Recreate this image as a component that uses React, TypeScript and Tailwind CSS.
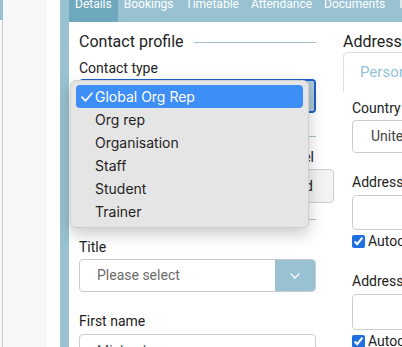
import React from "react";

const tabs = ["Details", "Bookings", "Timetable", "Attendance", "Documents", "Tasks"];
const contactTypes = ["Global Org Rep", "Org rep", "Organisation", "Staff", "Student", "Trainer"];

function Heading({ title }: { title: string }) {
  return (
    <div className="flex h-5 items-center gap-[10px]">
      <span className="whitespace-nowrap text-[16px] leading-5 text-[#222]">{title}</span>
      <div className="h-px flex-1 bg-[#a3c2ce]" />
    </div>
  );
}

function Label({ children }: { children: React.ReactNode }) {
  return <div className="text-[14px] leading-5 text-[#222]">{children}</div>;
}

function Chevron() {
  return (
    <svg width="10" height="6" viewBox="0 0 10 6" fill="none">
      <path d="M1 1l4 4 4-4" stroke="white" strokeWidth="1.2" strokeLinecap="round" strokeLinejoin="round" />
    </svg>
  );
}

function ContactTypeMenu() {
  return (
    <div className="absolute left-[-9px] top-px z-10 h-[148px] w-[239px] rounded-[6px] border border-[#cfcfcf] bg-[#e5e5e5] px-[5px] pt-[4px] font-['Inter',sans-serif] shadow-[0_6px_16px_rgba(0,0,0,0.22)]">
      {contactTypes.map((t, i) => (
        <div
          key={t}
          className={
            i === 0
              ? "flex h-[23px] items-center rounded-[4px] bg-[#3d8ef6] pl-[5px] text-[14px] text-white"
              : "flex h-[23px] items-center pl-[5px] text-[14px] text-[#1f1f1f]"
          }
        >
          <span className="flex w-[14px] items-center">
            {i === 0 && (
              <svg width="12" height="10" viewBox="0 0 12 10" fill="none">
                <path d="M1 5.2l3.6 3.6L11 1.2" stroke="white" strokeWidth="1.7" strokeLinecap="round" strokeLinejoin="round" />
              </svg>
            )}
          </span>
          {t}
        </div>
      ))}
    </div>
  );
}

export default function App() {
  return (
    <div className="flex h-[347px] w-[402px] overflow-hidden bg-white font-['Roboto',sans-serif]">
      {/* Side panel */}
      <div className="flex w-[3px] flex-col">
        <div className="h-[20px] bg-[#98c2d2]" />
        <div className="flex-1 border-r border-[#cbcbcb] bg-[#f7f7f7]" />
      </div>
      <div className="w-[44px] bg-[#f7f7f7]" />
      <div className="w-[13px] bg-white" />
      <div className="w-[9px] bg-[#98c2d2]" />

      {/* Main */}
      <div className="flex min-w-0 flex-1 flex-col">
        <div className="flex h-[22px] shrink-0 overflow-hidden bg-[#98c2d2]">
          {tabs.map((t, i) => (
            <div
              key={t}
              className={
                i === 0
                  ? "h-full whitespace-nowrap bg-[#6ea8bc] pl-[6px] pr-[6px] text-[12px] leading-[12px] text-white"
                  : "h-full whitespace-nowrap pl-[6px] pr-[6px] text-[12px] leading-[12px] text-white"
              }
            >
              <span className="-mt-[2px] block">{t}</span>
            </div>
          ))}
        </div>

        <div className="flex gap-[27px] pl-[10px] pt-[10px]">
          {/* Contact profile column */}
          <div className="w-[237px] shrink-0">
            <Heading title="Contact profile" />
            <div className="mt-[6px]">
              <Label>Contact type</Label>
            </div>
            <div className="relative mt-px">
              <div className="flex h-[34px] overflow-hidden rounded-[4px] border-2 border-[#1c5fc8]">
                <div className="flex flex-1 items-center pl-[16px] text-[14px] text-[#444]">Global Org Rep</div>
                <div className="flex w-[38px] items-center justify-center bg-[#a9c9d6]">
                  <Chevron />
                </div>
              </div>
              <ContactTypeMenu />
            </div>

            <div className="mt-[13px]">
              <Heading title="Organisation" />
            </div>
            <div className="mt-px pr-[2px] text-right text-[14px] leading-5 text-[#222]">Parent level</div>
            <div className="-mr-[18px] mt-[2px] flex justify-end">
              <div className="flex h-[34px] w-[120px] items-center justify-end rounded-[4px] border border-[#cccccc] bg-[#f3f3f3] pr-[20px] text-[14px] text-[#222]">
                Find / Add
              </div>
            </div>
            <div className="mt-[6px]">
              <Heading title="Personal details" />
            </div>

            <div className="mt-[8px]">
              <Label>Title</Label>
            </div>
            <div className="mt-[2px] flex h-[33px] overflow-hidden rounded-[4px] border border-[#cccccc]">
              <div className="flex flex-1 items-center pl-[17px] text-[14px] text-[#6b6b6b]">Please select</div>
              <div className="flex w-[40px] items-center justify-center bg-[#98c2d2]">
                <Chevron />
              </div>
            </div>

            <div className="mt-[19px]">
              <Label>First name</Label>
            </div>
            <div className="mt-[3px] h-[36px] rounded-[4px] border border-[#cccccc] pl-[17px] pt-[8px] text-[14px] leading-4 text-[#555]">
              Michael
            </div>
          </div>

          {/* Address column */}
          <div className="w-[237px] shrink-0">
            <Heading title="Address" />
            <div className="flex h-[40px] items-center rounded-tl-[5px] border-l border-t border-[#dcdcdc] pl-[16px] text-[15px] text-[#93c2d8]">
              Personal
            </div>
            <div className="pl-[9px]">
              <div className="mt-[6px]">
                <Label>Country</Label>
              </div>
              <div className="mt-[2px] flex h-[33px] items-center rounded-[4px] border border-[#cccccc] pl-[18px] text-[14px] text-[#444]">
                United Kingdom
              </div>

              <div className="mt-[19px]">
                <Label>Address</Label>
              </div>
              <div className="mt-[3px] h-[35px] rounded-[4px] border border-[#cccccc]" />
              <label className="mt-px flex h-5 items-center gap-[3px] text-[14px] text-[#222]">
                <input type="checkbox" checked readOnly className="h-[13px] w-[13px] accent-[#1f6fe0]" />
                Autocomplete
              </label>

              <div className="mt-[20px]">
                <Label>Address</Label>
              </div>
              <div className="mt-[3px] h-[36px] rounded-[4px] border border-[#cccccc]" />
              <label className="mt-px flex h-5 items-center gap-[3px] text-[14px] text-[#222]">
                <input type="checkbox" checked readOnly className="h-[13px] w-[13px] accent-[#1f6fe0]" />
                Autocomplete
              </label>
            </div>
          </div>
        </div>
      </div>
    </div>
  );
}
